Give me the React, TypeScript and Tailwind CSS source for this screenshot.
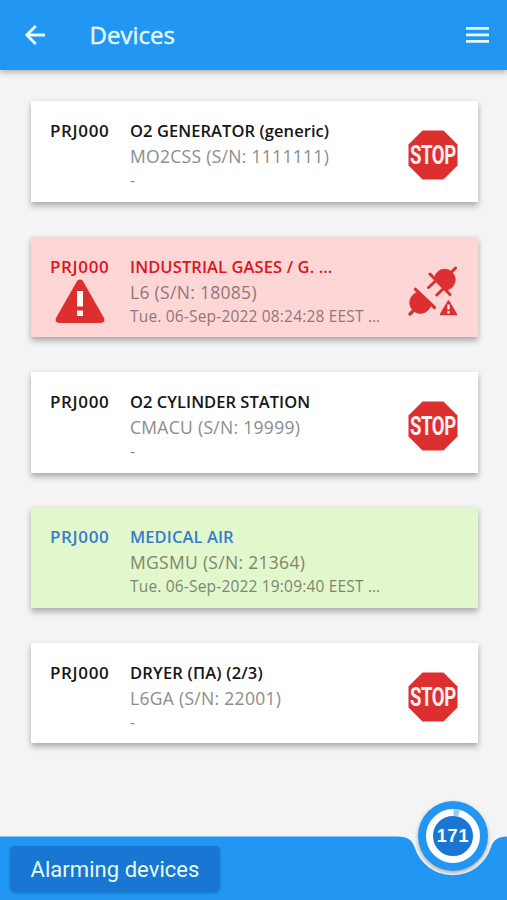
import React from "react";

type Tone = "idle" | "alarm" | "ok";

interface Device {
  name: string;
  model: string;
  time: string;
  tone: Tone;
  nameSpacing: string;
}

const devices: Device[] = [
  { name: "O2 GENERATOR (generic)", model: "MO2CSS (S/N: 1111111)", time: "-", tone: "idle", nameSpacing: "tracking-[0.07px]" },
  { name: "INDUSTRIAL GASES / G. …", model: "L6 (S/N: 18085)", time: "Tue. 06-Sep-2022 08:24:28 EEST …", tone: "alarm", nameSpacing: "tracking-[0.1px]" },
  { name: "O2 CYLINDER STATION", model: "CMACU (S/N: 19999)", time: "-", tone: "idle", nameSpacing: "tracking-[0.03px]" },
  { name: "MEDICAL AIR", model: "MGSMU (S/N: 21364)", time: "Tue. 06-Sep-2022 19:09:40 EEST …", tone: "ok", nameSpacing: "tracking-[0.1px]" },
  { name: "DRYER (ПА) (2/3)", model: "L6GA (S/N: 22001)", time: "-", tone: "idle", nameSpacing: "tracking-[0.18px]" },
];

const cardTone: Record<Tone, string> = {
  idle: "bg-white text-[#161616]",
  alarm: "bg-[#ffd6d6] text-[#dc1420]",
  ok: "bg-[#e3f7cd] text-[#347dcc]",
};

const detailTone: Record<Tone, string> = {
  idle: "text-[#8c8c8c]",
  alarm: "text-[#8f7779]",
  ok: "text-[#7b876e]",
};

function StopIcon() {
  return (
    <svg className="h-[50px] w-[50px] overflow-visible" viewBox="0 0 50 50">
      <path d="M14.5 .5H35.5L49.5 14.5V35.5L35.5 49.5H14.5L.5 35.5V14.5Z" fill="#db302f" />
      <g transform="translate(2 34.300) scale(0.7 1)">
        <text fontFamily="Roboto, sans-serif" fontWeight="700" fontSize="26.500" textLength="66" fill="#fff0ef">STOP</text>
      </g>
    </svg>
  );
}

function WarningIcon() {
  return (
    <svg className="h-[44px] w-[50px]" viewBox="0 0 50 44">
      <path d="M22.2 1.8Q25 -1 27.8 1.8L49 39Q50.6 43.5 46 44H4Q-.6 43.5 1 39Z" fill="#db302f" />
      <path d="M22 12h6v15.500h-6zM22 31.500h6v5.500h-6z" fill="#fff" />
    </svg>
  );
}

function UnpluggedIcon() {
  return (
    <svg className="h-[50px] w-[50px]" viewBox="0 0 50 50">
      <g fill="#db302f" stroke="#db302f" strokeLinecap="round">
        <path d="M26.100 12.200A10.700 10.700 0 1 1 37.900 24.400Z" strokeWidth="0.500" />
        <path d="M43.500 6L47.500 2M22 8L42 28.500M28 14.500L20.500 21.500M36 22L28.800 29" strokeWidth="3" fill="none" />
        <path d="M10.700 26.100A10.700 10.700 0 1 0 23.100 37.700Z" strokeWidth="1" />
        <path d="M7.500 23.300L26.500 41.500M6.500 43.500L2 48" strokeWidth="3.200" fill="none" />
        <path d="M40.500 35L48.500 48.500H32.500Z" strokeWidth="1.500" strokeLinejoin="round" />
      </g>
      <path d="M40.500 38.500V43.500M40.500 45V47.500" stroke="#ffeceb" strokeWidth="2.300" />
    </svg>
  );
}

function DeviceCard({ device }: { device: Device }) {
  return (
    <article className={`flex h-[100.800px] w-full pt-[18px] pr-5 pl-[19.500px] shadow-[0_4px_6px_rgba(0,0,0,0.28),0_0_5px_rgba(0,0,0,0.06)] ${cardTone[device.tone]}`}>
      <div className="w-20 shrink-0">
        <div className="h-6 text-[17px] leading-6 font-semibold tracking-[0.65px]">PRJ000</div>
        {device.tone === "alarm" && <div className="ml-[5px]"><WarningIcon /></div>}
      </div>
      <div className="min-w-0 flex-1 whitespace-nowrap">
        <div className={`h-6 text-[16.500px] leading-6 font-semibold ${device.nameSpacing}`}>{device.name}</div>
        <div className={`h-[26px] text-[17.500px] leading-[27px] tracking-[0.3px] ${detailTone[device.tone]}`}>{device.model}</div>
        <div className={`h-[23px] text-[15.500px] leading-[23px] tracking-[0.18px] ${detailTone[device.tone]}`}>{device.time}</div>
      </div>
      <div className="mt-[11px] mr-[-0.500px] h-[50px] w-[50px] shrink-0">
        {device.tone === "idle" && <StopIcon />}
        {device.tone === "alarm" && <UnpluggedIcon />}
      </div>
    </article>
  );
}

export default function App() {
  return (
    <div className="flex h-[900px] w-full flex-col overflow-hidden bg-[#f4f4f4] font-['Open_Sans','Noto_Sans',sans-serif]">
      <header className="flex h-[69.500px] shrink-0 items-center bg-[#2196f3] pr-[18px] pl-[25px] text-[#e6faff] shadow-[0_2px_6px_rgba(0,0,0,0.3)]">
        <svg className="h-5 w-5" viewBox="0 0 20 20" fill="none" stroke="currentColor" strokeWidth="2.800">
          <path d="M20 10H2M10.800 .9L1.800 10L10.800 19.100" />
        </svg>
        <h1 className="ml-[44.500px] text-[24px] leading-8 font-normal [-webkit-text-stroke:0.4px_currentColor]">Devices</h1>
        <svg className="ml-auto h-4 w-[23px]" viewBox="0 0 23 16" fill="currentColor">
          <path d="M0 0h23v2.700H0zM0 6.500h23v2.700H0zM0 13h23v2.700H0z" />
        </svg>
      </header>
      <main className="flex flex-1 flex-col gap-[34.500px] pt-[31.900px] pr-[29.500px] pl-[30.500px]">
        {devices.map((d) => <DeviceCard key={d.name} device={d} />)}
      </main>
      <footer className="relative h-16 shrink-0 pt-2.5 pl-2.5">
        <svg className="absolute inset-0 h-16 w-full" viewBox="0 0 507 64">
          <path d="M0 .5H397C408 .5 412 4 414.500 11A40 40 0 0 0 491 11C493.500 4 498 .5 507 .5V64H0Z" fill="#2196f3" />
        </svg>
        <button className="relative flex h-[46px] w-[210px] items-center justify-center rounded-[5px] bg-[#1976d2] font-[Roboto,sans-serif] text-[22px] tracking-[0.05px] text-[#e6faff] shadow-[0_1px_3px_rgba(0,0,0,0.2)]">Alarming devices</button>
        <div className="absolute top-[-35px] left-[418px] flex h-[70px] w-[70px] items-center justify-center rounded-full bg-[#2196f3] shadow-[0_2px_4px_rgba(0,0,0,0.3)]">
          <svg className="absolute inset-0" viewBox="0 0 70 70">
            <circle cx="35" cy="35" r="23.500" fill="#1976d2" stroke="white" strokeWidth="7" />
            <path d="M35.500 11.500A23.500 23.500 0 0 1 41 12.200" fill="none" stroke="#9bcdf8" strokeWidth="7" />
          </svg>
          <span className="relative font-['Liberation_Sans',sans-serif] text-[18px] font-bold tracking-[0.8px] text-white">171</span>
        </div>
      </footer>
    </div>
  );
}
